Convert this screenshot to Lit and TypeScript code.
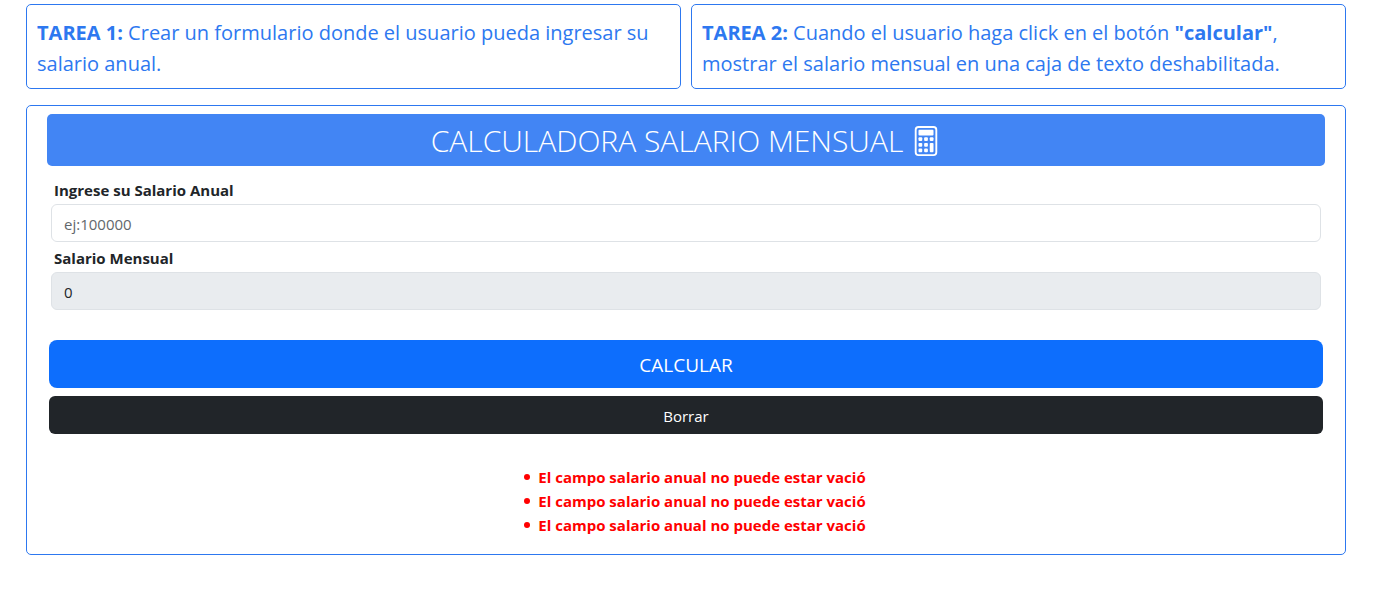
import { LitElement, html, css } from "lit";
import { customElement, state } from "lit/decorators.js";

@customElement("app-root")
export class AppRoot extends LitElement {
  static styles = css`
    :host {
      display: block;
      padding: 4px 36px 32px 26px;
      color: #212529;
      font: 400 15px/24px "Open Sans", "Noto Sans", sans-serif;
    }
    * {
      box-sizing: border-box;
    }
    .tasks {
      display: grid;
      grid-template-columns: 1fr 1fr;
      gap: 10px;
      margin-bottom: 16px;
    }
    .task {
      margin: 0;
      padding: 12px 10px 9px;
      border: 1px solid #2d78f0;
      border-radius: 5px;
      color: #2d78f0;
      font-size: 20px;
      line-height: 31px;
    }
    .panel {
      padding: 8px 20px 16px;
      border: 1px solid #2d78f0;
      border-radius: 5px;
    }
    .title {
      display: flex;
      align-items: center;
      justify-content: center;
      gap: 8px;
      margin: 0 0 12px;
      padding: 7px 6px 5px;
      border-radius: 5px;
      background: #4285f4;
      color: #fff;
      font-size: 30px;
      font-weight: 300;
      line-height: 40px;
    }
    .icon {
      width: 30px;
      height: 30px;
      fill: #fff;
    }
    .fields {
      padding: 0 4px;
      margin-bottom: 30px;
    }
    .label {
      display: block;
      padding: 0 3px;
      margin-bottom: 2px;
      font-weight: 700;
    }
    .input {
      display: block;
      width: 100%;
      height: 38px;
      margin-bottom: 4px;
      padding: 7px 12px 5px;
      border: 1px solid #dee2e6;
      border-radius: 6px;
      background: #fff;
      color: inherit;
      font: inherit;
    }
    .input::placeholder {
      color: #62676c;
      opacity: 1;
    }
    .input:disabled {
      margin-bottom: 0;
      background: #e9ecef;
    }
    .actions {
      display: grid;
      gap: 8px;
      padding: 0 2px;
      margin-bottom: 31px;
    }
    .button {
      padding: 8px 12px 6px;
      border: 0;
      border-radius: 6px;
      background: #212529;
      color: #fff;
      font: inherit;
      cursor: pointer;
    }
    .primary {
      padding: 10px 16px 8px;
      border-radius: 8px;
      background: #0d6efd;
      font-size: 19px;
      line-height: 30px;
    }
    .errors {
      width: fit-content;
      margin: 0 auto;
      padding: 0 0 1px 18px;
      color: #f00;
      font-weight: 700;
      list-style: none;
    }
    .error {
      display: flex;
      align-items: center;
      gap: 8px;
    }
    .error::before {
      content: "";
      width: 6px;
      height: 6px;
      border-radius: 50%;
      background: currentColor;
    }
  `;

  @state() private monthly = "0";

  private calculate(event: Event) {
    event.preventDefault();
    const form = event.target as HTMLFormElement;
    const annual = Number(new FormData(form).get("annual"));
    this.monthly = (annual / 12).toFixed(2);
  }

  private clear() {
    this.monthly = "0";
  }

  render() {
    const errors = Array(3).fill("El campo salario anual no puede estar vació");
    return html`
      <section class="tasks">
        <p class="task">
          <strong>TAREA 1:</strong> Crear un formulario donde el usuario pueda
          ingresar su salario anual.
        </p>
        <p class="task">
          <strong>TAREA 2:</strong> Cuando el usuario haga click en el botón
          <strong>"calcular"</strong>, mostrar el salario mensual en una caja de
          texto deshabilitada.
        </p>
      </section>
      <form class="panel" @submit=${this.calculate} @reset=${this.clear}>
        <h1 class="title">
          CALCULADORA SALARIO MENSUAL
          <svg class="icon" viewBox="0 0 16 16" aria-hidden="true">
            <path d="M12 1a1 1 0 0 1 1 1v12a1 1 0 0 1-1 1H4a1 1 0 0 1-1-1V2a1 1 0 0 1 1-1zM4 0a2 2 0 0 0-2 2v12a2 2 0 0 0 2 2h8a2 2 0 0 0 2-2V2a2 2 0 0 0-2-2z" />
            <rect x="4" y="2" width="8" height="3" rx=".5" />
            <rect x="4" y="6" width="2" height="2" rx=".5" />
            <rect x="7" y="6" width="2" height="2" rx=".5" />
            <rect x="10" y="6" width="2" height="2" rx=".5" />
            <rect x="4" y="9" width="2" height="2" rx=".5" />
            <rect x="7" y="9" width="2" height="2" rx=".5" />
            <rect x="4" y="12" width="2" height="2" rx=".5" />
            <rect x="7" y="12" width="2" height="2" rx=".5" />
            <rect x="10" y="9" width="2" height="5" rx=".5" />
          </svg>
        </h1>
        <div class="fields">
          <label class="label" for="annual">Ingrese su Salario Anual</label>
          <input class="input" id="annual" name="annual" placeholder="ej:100000" />
          <label class="label" for="monthly">Salario Mensual</label>
          <input class="input" id="monthly" .value=${this.monthly} disabled />
        </div>
        <div class="actions">
          <button class="button primary" type="submit">CALCULAR</button>
          <button class="button" type="reset">Borrar</button>
        </div>
        <ul class="errors">
          ${errors.map((message) => html`<li class="error">${message}</li>`)}
        </ul>
      </form>
    `;
  }
}
